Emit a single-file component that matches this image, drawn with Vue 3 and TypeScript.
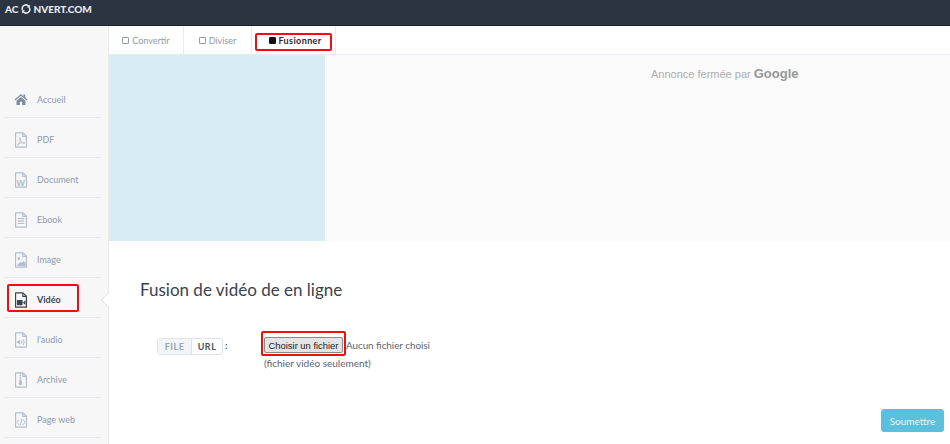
<script setup lang="ts">
const navItems = [
  { label: 'Accueil', icon: 'home' },
  { label: 'PDF', icon: 'pdf' },
  { label: 'Document', icon: 'doc' },
  { label: 'Ebook', icon: 'ebook' },
  { label: 'Image', icon: 'image' },
  { label: 'Vidéo', icon: 'video', active: true },
  { label: "l'audio", icon: 'audio' },
  { label: 'Archive', icon: 'archive' },
  { label: 'Page web', icon: 'web' },
]
const tabs = [
  { label: 'Convertir', w: 75 },
  { label: 'Diviser', w: 68 },
  { label: 'Fusionner', w: 84, active: true },
]
</script>

<template>
  <div class="page">
    <header class="topbar">
      <div class="logo">
        <span>AC</span>
        <svg class="logo-icon" viewBox="0 0 16 16" width="10" height="10" fill="none" stroke="#e8ebef" stroke-width="2.4">
          <path d="M2.5 9.5A5.7 5.7 0 0 1 12.4 4" />
          <path d="M13.5 6.5A5.7 5.7 0 0 1 3.6 12" />
          <path d="M14.5 1v5h-5z" fill="#e8ebef" stroke="none" />
          <path d="M1.5 15v-5h5z" fill="#e8ebef" stroke="none" />
        </svg>
        <span>NVERT.COM</span>
      </div>
    </header>
    <div class="body">
      <aside class="sidebar">
        <a v-for="item in navItems" :key="item.label" class="nav-item" :class="{ active: item.active }">
          <span class="nav-icon">
            <svg v-if="item.icon === 'home'" class="home" viewBox="0 0 18 16" width="14" height="13" fill="currentColor">
              <path d="M9 1 0.6 8l1 1.2L9 3.2l7.4 6 1-1.2-3-2.5V1.6h-2.2v2.1z" />
              <path d="M3.2 9.600 9 4.800l5.800 4.800V15h-4.300v-4h-3v4H3.200z" />
            </svg>
            <svg v-else viewBox="0 0 14 18" width="14" height="16" fill="none" stroke="currentColor" stroke-width="1.300">
              <path d="M.9.900h8.300l3.900 3.900v12.300H.9z" stroke-linejoin="round" />
              <path d="M9 1v4h4" />
              <path v-if="item.icon === 'pdf'" d="M2.800 14.800c2-1 3.600-4.500 3.700-7.600.1-1.200-1-1.200-1 .2 0 2.600 3 5.400 5.400 5.400 1 0 .9-1-.3-1-2.400 0-5.800 1-7.800 3z" stroke-width="1" />
              <text v-if="item.icon === 'doc'" x="6.800" y="15.200" text-anchor="middle" class="doc-w" fill="currentColor" stroke="none">W</text>
              <path v-if="item.icon === 'ebook'" d="M3.300 7.500h7.400M3.300 10.200h7.400M3.300 12.900h7.400" />
              <template v-if="item.icon === 'image'">
                <circle cx="4.600" cy="7.500" r="1.500" fill="currentColor" stroke="none" />
                <path d="M2 15.600 6.300 11l1.500 1.500 2-2.500 2.500 2.500v3.600z" fill="currentColor" stroke="none" />
              </template>
              <template v-if="item.icon === 'video'">
                <rect x="2.400" y="9" width="6.400" height="5.800" rx=".6" fill="currentColor" stroke="none" />
                <path d="M9 11.900 12 9.300v5.200z" fill="currentColor" stroke="none" />
              </template>
              <template v-if="item.icon === 'audio'">
                <path d="M2.300 10.300h1.500l2.200-1.900v6l-2.200-1.900H2.300z" fill="currentColor" stroke="none" />
                <path d="M7.500 9.800a2.500 2.500 0 0 1 0 3.200M9.300 8.300a4.500 4.500 0 0 1 0 6.200" stroke-width="1.100" />
              </template>
              <template v-if="item.icon === 'archive'">
                <path d="M6.400 1v8" stroke-dasharray="1.500 1" stroke-width="1.900" />
                <path d="M5.300 9h2.200l.9 3.800a2 2 0 1 1-4 0z" fill="currentColor" stroke="none" />
              </template>
              <path v-if="item.icon === 'web'" d="M4.800 8.500 2.300 11.500 4.800 14.500M9.200 8.500l2.500 3-2.500 3M8 7.800l-2 7.400" stroke-width="1.100" />
            </svg>
          </span>
          <span class="nav-label">{{ item.label }}</span>
        </a>
        <span class="notch"></span>
        <span class="mark mark-nav"></span>
      </aside>
      <main class="main">
        <nav class="tabs">
          <a v-for="tab in tabs" :key="tab.label" class="tab" :class="{ active: tab.active }" :style="{ width: tab.w + 'px' }">
            <span class="tab-box"></span>{{ tab.label }}
          </a>
          <span class="mark mark-tab"></span>
        </nav>
        <section class="ad">
          <div class="ad-blue"></div>
          <div class="ad-closed">Annonce fermée par <b>Google</b></div>
        </section>
        <section class="content">
          <h1>Fusion de vidéo de en ligne</h1>
          <div class="form-row">
            <div class="source">
              <div class="switch">
                <span class="switch-off">FILE</span>
                <span class="switch-on">URL</span>
              </div>
              <span class="colon">:</span>
            </div>
            <div class="file-field">
              <div class="file-line">
                <button class="file-btn" type="button">Choisir un fichier</button>
                <span class="file-none">Aucun fichier choisi</span>
                <span class="mark mark-file"></span>
              </div>
              <p class="hint">(fichier vidéo seulement)</p>
            </div>
          </div>
          <div class="actions">
            <button class="submit" type="button">Soumettre</button>
          </div>
        </section>
      </main>
    </div>
  </div>
</template>

<style scoped>
.page {
  width: 950px; height: 444px; overflow: hidden; display: flex; flex-direction: column;
  font-family: Lato, "Open Sans", sans-serif; background: #fff;
}
.topbar { height: 26px; flex: none; background: #2b3440; border-bottom: 1px solid #1c222b; box-sizing: border-box; }
.logo {
  display: flex; align-items: center; padding: 0 0 0 5px; height: 17px;
  color: #e8ebef; font-size: 10px; font-weight: 900;
}
.logo-icon { margin: 0 2px 0 3px; }
.body { flex: 1; display: flex; min-height: 0; }
.sidebar {
  position: relative; width: 109px; flex: none; box-sizing: border-box;
  padding: 52px 7px 0 4px; background: #f7f7f7; border-right: 1px solid #eaeaea;
}
.nav-item {
  display: flex; align-items: center; height: 40px; box-sizing: border-box;
  padding: 4px 0 0 10px; border-bottom: 1px solid #e6eaf0; color: #b3bdcc;
}
.nav-item.active { color: #3a4453; }
.nav-icon { width: 14px; display: flex; justify-content: center; margin-right: 9px; }
.home { color: #7f8da3; }
.nav-label { font-size: 9px; color: #8f9aad; }
.nav-item.active .nav-label { font-weight: 700; color: #3a4453; }
.doc-w { font-size: 10px; font-weight: 700; font-family: "Liberation Sans", sans-serif; }
.notch {
  position: absolute; right: -7px; top: 268px; width: 12px; height: 12px; box-sizing: border-box;
  background: #fff; border-left: 1px solid #e4e4e4; border-bottom: 1px solid #e4e4e4; transform: rotate(45deg);
}
.mark { position: absolute; border: 2px solid #f40d0d; border-radius: 2px; box-sizing: border-box; pointer-events: none; }
.mark-nav { left: 7px; top: 258px; width: 72px; height: 28px; }
.main { flex: 1; min-width: 0; display: flex; flex-direction: column; }
.tabs { position: relative; height: 29px; flex: none; display: flex; box-sizing: border-box; background: #fff; border-bottom: 1px solid #e9ecf3; }
.tab {
  box-sizing: border-box; display: flex; align-items: center; justify-content: center;
  font-size: 9px; color: #8f9aad; border-right: 1px solid #e9ecf3;
}
.tab-box { width: 7px; height: 7px; box-sizing: border-box; border: 1px solid #8f9aad; border-radius: 1px; margin-right: 3px; }
.tab.active { color: #2a2a2a; font-weight: 700; padding-left: 4px; letter-spacing: .4px; }
.tab.active .tab-box { background: #111; border-color: #111; margin-right: 2px; }
.mark-tab { left: 146px; top: 7px; width: 77px; height: 18px; }
.ad { height: 186px; flex: none; display: flex; background: #fafafa; }
.ad-blue { width: 216px; background: #d8ecf5; }
.ad-closed { flex: 1; padding: 11px 0 0 326px; font-family: "Liberation Sans", sans-serif; font-size: 11px; color: #adadad; white-space: pre-wrap; }
.ad-closed b { font-size: 13px; color: #979797; }
.content { flex: 1; display: flex; flex-direction: column; padding: 0 6px 0 31px; min-height: 0; }
h1 { margin: 38px 0 0; font-size: 17px; line-height: 22px; font-weight: 400; color: #39424f; }
.form-row { display: flex; margin-top: 35px; }
.source { width: 104px; margin-left: 17px; flex: none; display: flex; align-items: flex-start; padding-top: 2px; }
.switch { display: flex; height: 17px; border: 1px solid #dfe4ec; border-radius: 3px; box-sizing: border-box; font-size: 9px; font-weight: 700; line-height: 15px; letter-spacing: .5px; }
.switch-off { width: 33px; text-align: center; background: #f2f4f8; color: #9aa5b5; border-right: 1px solid #dfe4ec; }
.switch-on { width: 30px; text-align: center; color: #4a5361; }
.colon { font-size: 9.500px; margin: 2px 0 0 2px; line-height: 12px; font-weight: 700; color: #4a5361; }
.file-field { flex: none; }
.file-line { position: relative; display: flex; align-items: center; height: 18px; }
.file-btn {
  width: 79px; height: 16px; padding: 0; box-sizing: border-box; font-family: "Liberation Sans", sans-serif; font-size: 9.400px; color: #222;
  background: #e4e4e4; border: 1px solid #8a8a8a; border-radius: 2px; margin-left: 3px;
}
.file-none { margin-left: 3px; font-size: 9.800px; color: #5c6470; }
.mark-file { left: 0; top: -5px; width: 85px; height: 25px; }
.hint { margin: 3px 0 0 3px; font-size: 10px; line-height: 12px; color: #5c6470; }
.actions { margin-top: auto; display: flex; justify-content: flex-end; padding-bottom: 12px; }
.submit { width: 63px; height: 23px; padding: 0; border: 1px solid #5bc0de; border-radius: 3px; background: #5bc0de; color: #eaf7fb; font-family: Lato, sans-serif; font-size: 10px; }
</style>
<style>
html, body { margin: 0; background: #fff; }
</style>
